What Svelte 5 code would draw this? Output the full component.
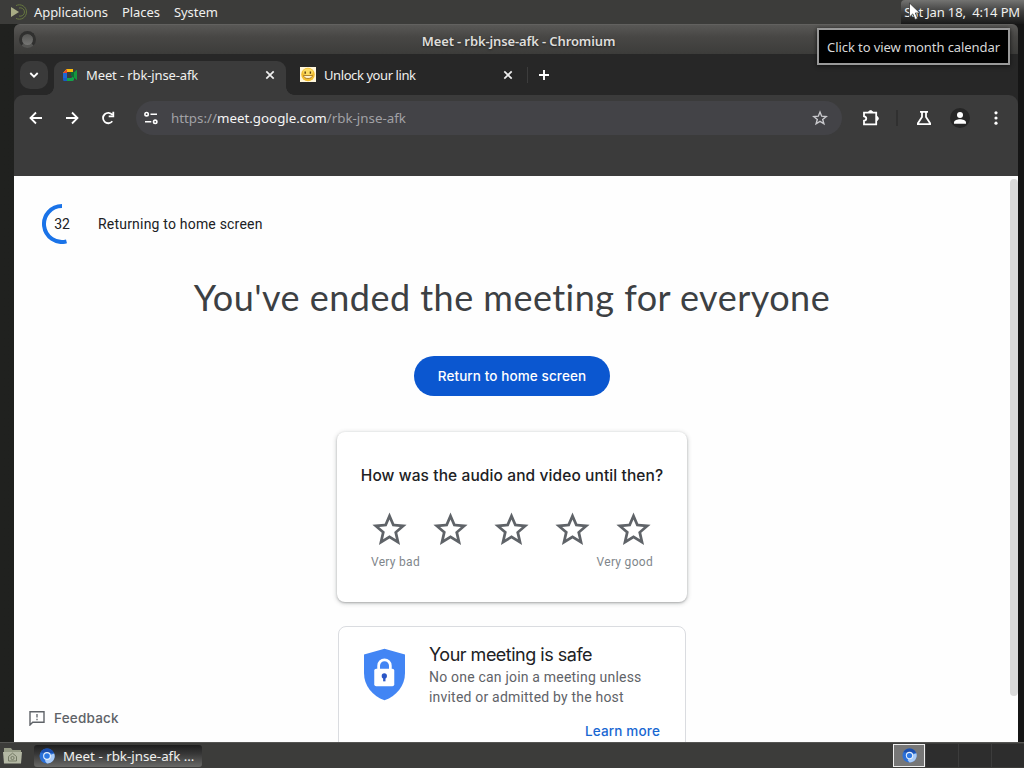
<script>
	const menus = ['Applications', 'Places', 'System'];
	const stars = [1, 2, 3, 4, 5];

	let rating = $state(0);
	let seconds = $state(32);
</script>

{#snippet chromium(size)}
	<svg class="chromium" width={size} height={size} viewBox="0 0 16 16">
		<circle cx="8" cy="8" r="7.5" fill="#2b6fd6" />
		<path d="M8 8 15.3 5.6A7.5 7.5 0 0 1 8 15.5L6 13z" fill="#a9cbf8" />
		<path d="M1.4 4.6A7.5 7.5 0 0 1 15 5H8z" fill="#1b4fae" />
		<circle cx="8" cy="8" r="3.9" fill="#e8f0fc" />
		<circle cx="8" cy="8" r="2.8" fill="#2d78e4" />
	</svg>
{/snippet}

{#snippet close()}
	<svg class="close" width="10" height="10" viewBox="0 0 10 10">
		<path d="M1.3 1.3l7.4 7.4M8.7 1.3L1.3 8.7" stroke="#eee" stroke-width="1.7" />
	</svg>
{/snippet}

<div class="desktop">
	<header class="panel top">
		<svg class="logo" width="20" height="18" viewBox="0 0 20 18">
			<g fill="none" stroke="#66773f" stroke-width="1">
				<path d="M6 2.6A7.2 7.2 0 1 1 6 15.4" />
				<path d="M9 5A4.2 4.2 0 1 1 9 13" />
			</g>
			<path d="M1 4l8 5-8 5z" fill="#a9ad85" />
		</svg>
		{#each menus as menu}
			<span class="menu">{menu}</span>
		{/each}
		<div class="clock">Sat Jan 18,&nbsp; 4:14 PM</div>
	</header>

	<section class="window">
		<div class="titlebar">
			<span class="knob"></span>
			<span class="title">Meet - rbk-jnse-afk - Chromium</span>
		</div>

		<div class="tabs">
			<button class="search" aria-label="Search tabs">
				<svg width="10" height="8" viewBox="0 0 10 8">
					<path d="M1.3 2L5 5.7 8.7 2" fill="none" stroke="#fff" stroke-width="1.8" />
				</svg>
			</button>
			<div class="tab active">
				<svg width="16" height="16" viewBox="0 0 16 16">
					<path d="M1 6l3.500-4H11v3H5v1z" fill="#f9b90c" />
					<path d="M1 6.200L5 2v4.200z" fill="#e8432f" />
					<path d="M1 6h4v5H1z" fill="#1c66d6" />
					<path d="M1 11h4v3H2.300A1.300 1.300 0 0 1 1 12.700z" fill="#195bc4" />
					<path d="M5 11h4l3-2v3.600A1.400 1.400 0 0 1 10.600 14H5z" fill="#13a34b" />
					<path d="M9 8l6-5.200v10.400z" fill="#16963f" />
					<path d="M9 8V5h3v6z" fill="#0b6c33" />
				</svg>
				<span class="label">Meet - rbk-jnse-afk</span>
				{@render close()}
			</div>
			<div class="tab">
				<svg width="16" height="15" viewBox="0 0 16 15">
					<path d="M0 0h16v15H0z" fill="#fff6da" />
					<circle cx="8" cy="7.500" r="6.800" fill="#f2bd2f" />
					<ellipse cx="8" cy="5" rx="5" ry="3.400" fill="#fbdc63" />
					<path d="M5.200 4.500v2.200M10.400 4.500v2.200" stroke="#5b3b0c" stroke-width="1.400" />
					<path d="M3.500 8.500h9c-.4 2-2 3-4.500 3s-4.100-1-4.500-3z" fill="#fff3d0" stroke="#a06d17" stroke-width=".8" />
				</svg>
				<span class="label">Unlock your link</span>
				{@render close()}
			</div>
			<span class="divider"></span>
			<svg class="plus" width="12" height="12" viewBox="0 0 12 12">
				<path d="M6 1v10M1 6h10" stroke="#fff" stroke-width="1.900" />
			</svg>
		</div>

		<div class="toolbar">
			<svg width="16" height="16" viewBox="0 0 16 16">
				<path d="M14 8H3M8 2.500L2.500 8 8 13.500" />
			</svg>
			<svg width="16" height="16" viewBox="0 0 16 16">
				<path d="M2 8h11M8 2.500L13.500 8 8 13.500" />
			</svg>
			<svg width="16" height="16" viewBox="0 0 16 16">
				<path d="M12.300 11.300A5.200 5.200 0 1 1 12.300 4.800M13.300 1.700v4.600H8.700" />
			</svg>
			<div class="address">
				<svg width="16" height="16" viewBox="0 0 16 16">
					<path d="M7.500 4.200H14M2 11.800h6.300" />
					<circle cx="3.600" cy="4.200" r="1.700" />
					<circle cx="12.200" cy="11.800" r="1.700" />
				</svg>
				<span class="url">https://<b>meet.google.com</b>/rbk-jnse-afk</span>
				<svg class="bookmark" width="16" height="16" viewBox="0 0 16 16">
					<path d="M8 2l1.700 4.200 4.500.3-3.500 2.900 1.200 4.400L8 11.400l-3.900 2.400 1.200-4.400-3.500-2.900 4.500-.3z" />
				</svg>
			</div>
			<svg class="puzzle" width="18" height="18" viewBox="0 0 18 18">
				<path d="M2 3.700h12.200v11.600H2v-3.600c3-.3 3-4.100 0-4.400z" />
				<path d="M6.700 3a2 2 0 0 1 3.800 0zM15 7.600a2 2 0 0 1 0 3.800z" fill="#fff" stroke-width="1" />
			</svg>
			<span class="divider"></span>
			<svg class="flask" width="16" height="16" viewBox="0 0 16 16">
				<path d="M4 1.900h8M6 2v5L1.900 13.200v.9h12.200v-.9L10 7V2" />
			</svg>
			<span class="avatar">
				<svg width="14" height="14" viewBox="0 0 14 14">
					<circle cx="7" cy="4" r="3" fill="#fff" stroke="none" />
					<path d="M1 12.700v-1.200C1 9.200 4.500 8.200 7 8.200s6 1 6 3.300v1.200z" fill="#fff" stroke="none" />
				</svg>
			</span>
			<svg class="more" width="4" height="16" viewBox="0 0 4 16">
				<g fill="#fff" stroke="none">
					<circle cx="2" cy="2.800" r="1.600" />
					<circle cx="2" cy="8" r="1.600" />
					<circle cx="2" cy="13.200" r="1.600" />
				</g>
			</svg>
		</div>

		<main>
			<div class="countdown">
				<div class="ring">
					<svg width="40" height="40" viewBox="0 0 40 40">
						<path d="M20 2A18 18 0 1 0 24.500 37.430" fill="none" stroke="#1a73e8" stroke-width="4" />
					</svg>
					<span>{seconds}</span>
				</div>
				<span class="returning">Returning to home screen</span>
			</div>

			<h1>You've ended the meeting for everyone</h1>
			<button class="home">Return to home screen</button>

			<div class="card rate">
				<h2>How was the audio and video until then?</h2>
				<div class="stars">
					{#each stars as n}
						<button class:chosen={n <= rating} aria-label="{n} stars" onclick={() => (rating = n)}>
							<svg width="41" height="41" viewBox="0 0 24 24">
								<path d="M22 9.240l-7.190-.62L12 2 9.190 8.630 2 9.240l5.460 4.730L5.820 21 12 17.270 18.180 21l-1.630-7.030L22 9.240zM12 15.400l-3.760 2.270 1-4.280-3.320-2.880 4.380-.38L12 6.100l1.710 4.040 4.380.38-3.320 2.880 1 4.280L12 15.400z" />
							</svg>
						</button>
					{/each}
				</div>
				<div class="scale"><span>Very bad</span><span>Very good</span></div>
			</div>

			<div class="card safe">
				<svg class="shield" width="41" height="53" viewBox="0 0 42 53">
					<path d="M21 0L42 6v19c0 13-8.500 23.500-21 28C8.500 48.500 0 38 0 25V6z" fill="#4285f4" />
					<path d="M15 22v-4.500a6 6 0 0 1 12 0V22" fill="none" stroke="#fff" stroke-width="2.800" />
					<rect x="10.500" y="20.500" width="20.500" height="18" rx="2" fill="#fff" />
					<circle cx="20.800" cy="28" r="2.700" fill="#2a56c6" />
					<path d="M19.600 28h2.400v5.500h-2.400z" fill="#2a56c6" />
				</svg>
				<div class="text">
					<h3>Your meeting is safe</h3>
					<p>No one can join a meeting unless<br />invited or admitted by the host</p>
					<span class="learn">Learn more</span>
				</div>
			</div>

			<div class="feedback">
				<svg width="16" height="16" viewBox="0 0 16 16">
					<path d="M1 15V1.700h14v10.600H3.700z" fill="none" stroke="#5f6368" stroke-width="1.400" />
					<path d="M8 4v3.600M8 8.800v1.500" stroke="#5f6368" stroke-width="1.300" />
				</svg>
				<span>Feedback</span>
			</div>
			<div class="scrollbar"></div>
		</main>
	</section>

	<footer class="panel bottom">
		<svg class="files" width="19" height="17" viewBox="0 0 19 17">
			<path d="M1 1h7l1.500 2H18v13H1z" fill="#969b86" />
			<path d="M0 5h19l-1 11.500H1z" fill="#b4b8a4" />
			<path d="M5.500 14V9.500l4-3.300 4 3.300V14z" fill="none" stroke="#747a65" stroke-width="1" />
			<circle cx="9.500" cy="11" r="1.600" fill="none" stroke="#747a65" />
		</svg>
		<div class="task">
			{@render chromium(16)}
			<span>Meet - rbk-jnse-afk …</span>
		</div>
		<div class="workspaces">
			<div class="current">{@render chromium(15)}</div>
			<div></div>
			<div></div>
			<div></div>
		</div>
	</footer>

	<div class="tooltip">Click to view month calendar</div>
	<svg class="pointer" width="14" height="20" viewBox="0 0 14 20">
		<path d="M1.500 1v14l3.300-3.100 2.300 5.600 2.500-1-2.300-5.500h4.500z" fill="#fff" stroke="#333" stroke-width=".8" />
	</svg>
</div>

<style>
	:global(body) {
		margin: 0;
		overflow: hidden;
		background: #1d1d1c;
	}

	button {
		border: 0;
		padding: 0;
		font: inherit;
	}

	svg {
		display: block;
		flex: none;
	}

	.desktop {
		position: relative;
		display: flex;
		flex-direction: column;
		width: 1024px;
		height: 768px;
		overflow: hidden;
		background: linear-gradient(to right, #20211f, #151515);
		font: 13px/18px 'Noto Sans', sans-serif;
		color: #f0f0ee;
		white-space: nowrap;
	}

	.panel {
		display: flex;
		align-items: center;
		flex: none;
		background: #3c3c3a;
	}

	.top {
		height: 24px;
		padding-left: 10px;
	}

	.logo {
		margin-right: 4px;
	}

	.menu {
		margin-right: 14px;
		letter-spacing: -0.06px;
	}

	.clock {
		width: 123px;
		height: 24px;
		box-sizing: border-box;
		padding-right: 4px;
		margin-left: auto;
		line-height: 25px;
		text-align: right;
		border-radius: 4px 0 0 0;
		background: linear-gradient(#747472, #3e3e3d 50%, #191919);
		letter-spacing: -0.15px;
	}

	.window {
		display: flex;
		flex-direction: column;
		width: 1004px;
		height: 718px;
		margin-left: 14px;
		background: #272727;
		border-radius: 6px 6px 0 0;
		overflow: hidden;
	}

	.titlebar {
		display: flex;
		align-items: center;
		height: 30px;
		flex: none;
		background: linear-gradient(#595856, #484745 40%, #3c3c3a);
		border-top: 1px solid #62615f;
		box-sizing: border-box;
	}

	.knob {
		width: 11px;
		height: 11px;
		margin-left: 5px;
		border: 3px solid #30302f;
		border-bottom-color: #555553;
		border-radius: 50%;
		background: linear-gradient(#555553, #767674);
	}

	.title {
		flex: 1;
		padding: 3px 17px 0 0;
		text-align: center;
		font-weight: 600;
		letter-spacing: -0.12px;
		color: #deddda;
		text-shadow: 0 1px 2px #222;
	}

	.tabs {
		display: flex;
		align-items: center;
		height: 41px;
		flex: none;
	}

	.search {
		display: grid;
		place-items: center;
		width: 28px;
		height: 28px;
		margin: 0 6px;
		border-radius: 10px;
		background: #3a3a3a;
	}

	.tab {
		display: flex;
		align-items: center;
		width: 213px;
		padding: 0 10px 0 12px;
		height: 34px;
		letter-spacing: -0.42px;
	}

	.tab.active {
		position: relative;
		width: 213px;
		align-self: flex-end;
		height: 28px;
		padding: 0 11px 6px 8px;
		margin-right: 2px;
		border-radius: 9px 9px 0 0;
		background: #3b3b3b;
		letter-spacing: -0.12px;
	}

	/* flared feet of the active tab */
	.tab.active::before,
	.tab.active::after {
		content: '';
		position: absolute;
		bottom: 0;
		width: 8px;
		height: 8px;
	}

	.tab.active::before {
		left: -8px;
		background: radial-gradient(circle at 0 0, transparent 7.500px, #3b3b3b 8px);
	}

	.tab.active::after {
		right: -8px;
		background: radial-gradient(circle at 100% 0, transparent 7.500px, #3b3b3b 8px);
	}

	.label {
		flex: 1;
		margin-left: 8px;
	}

	.tabs .divider {
		width: 1px;
		height: 16px;
		margin: 0 10px 0 4px;
		background: #3c3c3c;
	}

	.toolbar {
		display: flex;
		align-items: center;
		height: 46px;
		padding: 0 0 35px 14px;
		flex: none;
		background: #3b3b3b;
		border-radius: 9px 9px 0 0;
	}

	.toolbar svg {
		fill: none;
		stroke: #fff;
		stroke-width: 1.8;
	}

	.toolbar > svg {
		margin-right: 20px;
	}

	.address {
		display: flex;
		align-items: center;
		width: 708px;
		height: 34px;
		box-sizing: border-box;
		padding: 0 14px 0 7px;
		border-radius: 17px;
		background: #434347;
	}

	.address svg {
		stroke-width: 1.6;
	}

	.url {
		flex: 1;
		margin-left: 12px;
		font-size: 13.33px;
		color: #a1a1a5;
	}

	.url b {
		font-weight: 400;
		color: #f5f5f5;
	}

	.toolbar .bookmark {
		stroke: #c8c8cc;
		stroke-width: 1.4;
	}

	.toolbar .puzzle {
		margin: 0 16px 0 20px;
	}

	.toolbar .divider {
		width: 2px;
		height: 16px;
		margin-right: 18px;
		background: #303030;
	}

	.avatar {
		display: grid;
		place-items: center;
		width: 20px;
		height: 20px;
		margin: 0 24px 0 -2px;
		border-radius: 50%;
		background: #262626;
	}

	.toolbar .flask {
		margin-right: 20px;
	}

	main {
		position: relative;
		display: flex;
		flex-direction: column;
		align-items: center;
		height: 566px;
		box-sizing: border-box;
		padding: 28px 8px 0 0;
		flex: none;
		overflow: hidden;
		background: #fefefe;
		color: #202124;
	}

	.countdown {
		display: flex;
		align-items: center;
		align-self: flex-start;
		height: 40px;
		margin-left: 28px;
		font-family: Roboto, sans-serif;
		font-size: 14px;
	}

	.ring {
		display: grid;
		place-items: center;
		width: 40px;
		margin-right: 16px;
	}

	.ring > * {
		grid-area: 1 / 1;
	}

	.returning {
		letter-spacing: 0.2px;
	}

	h1,
	h2,
	h3,
	p {
		margin: 0;
		font-weight: 400;
	}

	h1 {
		margin-top: 31px;
		font: 400 36px/44px Lato, sans-serif;
		letter-spacing: 0.47px;
		color: #3c4043;
	}

	.home {
		width: 196px;
		height: 40px;
		margin-top: 37px;
		border-radius: 20px;
		background: #0b57d0;
		color: #fff;
		font: 500 13.5px/40px Inter, sans-serif;
		letter-spacing: 0.1px;
	}

	.card {
		box-sizing: border-box;
		flex: none;
		background: #fff;
	}

	.rate {
		width: 350px;
		height: 170px;
		margin-top: 36px;
		padding: 32px 20px 0;
		border-radius: 8px;
		box-shadow: 0 1px 2px rgba(60, 64, 67, 0.3), 0 1px 4px 1px rgba(60, 64, 67, 0.2);
	}

	h2 {
		font: 500 15.5px/24px Inter, sans-serif;
		text-align: center;
		letter-spacing: 0.1px;
	}

	.stars {
		display: flex;
		justify-content: space-between;
		margin: 21px 13px 1px 12px;
	}

	.stars button {
		background: none;
		display: grid;
		place-items: center;
	}

	.stars path {
		fill: #5f6368;
	}

	.stars .chosen path {
		fill: #1a73e8;
	}

	.scale {
		display: flex;
		justify-content: space-between;
		padding: 3px 14px 0;
		font: 12px/16px Roboto, sans-serif;
		letter-spacing: 0.3px;
		color: #80868b;
	}

	.safe {
		display: flex;
		width: 348px;
		height: 180px;
		margin-top: 24px;
		padding: 16px 25px 0 24px;
		border: 1px solid #dadce0;
		border-radius: 8px;
	}

	.shield {
		margin: 5px 24px 0 1px;
	}

	.text {
		display: flex;
		flex-direction: column;
		flex: 1;
	}

	h3 {
		font: 400 18px/24px Inter, sans-serif;
		letter-spacing: -0.5px;
	}

	p {
		font: 14px/20px Roboto, sans-serif;
		letter-spacing: 0.2px;
		color: #5f6368;
	}

	.learn {
		align-self: flex-end;
		margin-top: 14px;
		font: 500 13.5px/20px Inter, sans-serif;
		letter-spacing: 0.15px;
		color: #1967d2;
	}

	.feedback {
		position: absolute;
		left: 15px;
		bottom: 14px;
		display: flex;
		align-items: center;
		gap: 9px;
		font: 500 13.5px/20px Inter, sans-serif;
		letter-spacing: 0.2px;
		color: #5f6368;
	}

	.scrollbar {
		position: absolute;
		top: 3px;
		right: 0;
		width: 8px;
		height: 517px;
		border-radius: 4px;
		background: #dadada;
	}

	.bottom {
		height: 26px;
		box-sizing: border-box;
		border-top: 1px solid #555553;
		padding-left: 3px;
	}

	.task {
		display: flex;
		align-items: center;
		width: 168px;
		height: 22px;
		box-sizing: border-box;
		padding-left: 5px;
		margin-left: 12px;
		border-radius: 3px;
		background: linear-gradient(#1d1d1d, #373737 40%, #696967);
		font-size: 13.33px;
	}

	.task span {
		margin-left: 8px;
	}

	.workspaces {
		display: flex;
		gap: 1px;
		height: 23px;
		margin-left: auto;
		background: #3c3c3c;
	}

	.workspaces div {
		width: 32px;
		background: #2d2d2d;
	}

	.workspaces .current {
		display: grid;
		place-items: center;
		box-sizing: border-box;
		border: 1px solid #eee;
		background: #777;
	}

	.tooltip {
		position: absolute;
		top: 28px;
		left: 817px;
		width: 193px;
		height: 37px;
		box-sizing: border-box;
		border: 2px solid #999;
		background: #000;
		color: #d8d8d8;
		line-height: 34px;
		letter-spacing: -0.08px;
		text-align: center;
		box-shadow: 0 1px 4px #111;
	}

	.pointer {
		position: absolute;
		top: 2px;
		left: 908px;
	}
</style>
